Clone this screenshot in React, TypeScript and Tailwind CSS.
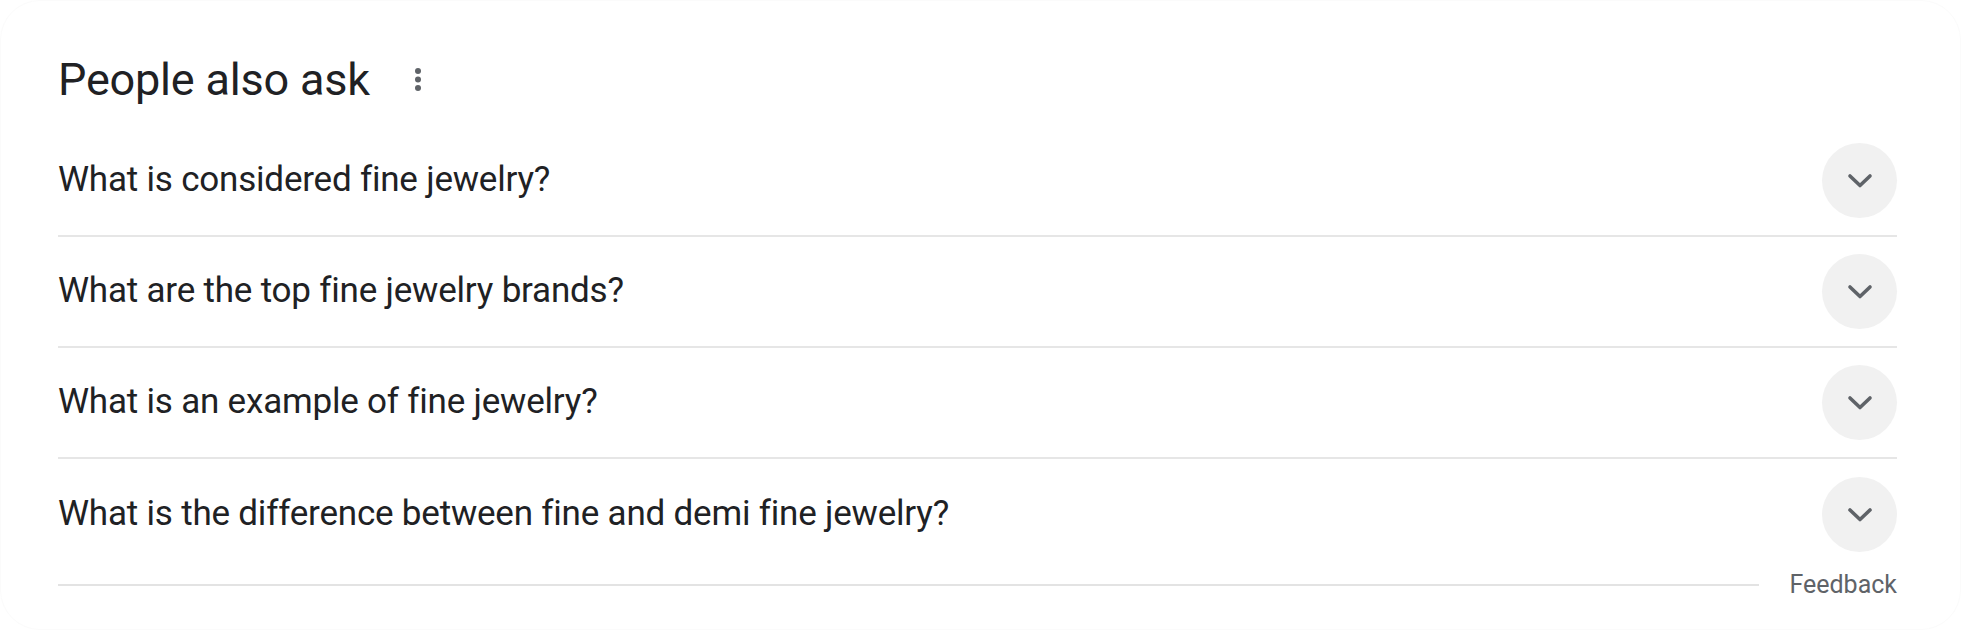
import React from 'react';

const questions = [
  'What is considered fine jewelry?',
  'What are the top fine jewelry brands?',
  'What is an example of fine jewelry?',
  'What is the difference between fine and demi fine jewelry?',
];

// Chevron inside the grey round toggle
const Chevron = () => (
  <svg width="26" height="16" viewBox="0 0 26 16" fill="none">
    <path d="M3 3 L13 12.5 L23 3" stroke="#5f6368" strokeWidth="3.6" strokeLinecap="round" strokeLinejoin="round" />
  </svg>
);

// Vertical three-dot menu
const Kebab = () => (
  <svg width="8" height="26" viewBox="0 0 8 26">
    <circle cx="4" cy="4" r="3" fill="#5f6368" />
    <circle cx="4" cy="12.5" r="3" fill="#5f6368" />
    <circle cx="4" cy="21" r="3" fill="#5f6368" />
  </svg>
);

export default function App() {
  return (
    <div
      className="w-[1961px] h-[630px] bg-white rounded-[40px] border border-[#fbfbfb] pl-[57px] pr-[63px] flex flex-col"
      style={{ fontFamily: 'Roboto, "Open Sans", Arial, sans-serif' }}
    >
      {/* Header */}
      <div className="h-[125px] flex items-start pt-[52px] gap-[44px]">
        <h2 className="text-[45px] leading-[54px] text-[#202124] tracking-[-0.2px]">People also ask</h2>
        <div className="mt-[14px]">
          <Kebab />
        </div>
      </div>

      {/* Questions */}
      <div className="flex flex-col">
        {questions.map((q, i) => (
          <div
            key={q}
            className={
              i < questions.length - 1
                ? 'h-[111px] flex items-center justify-between border-b-2 border-[#e6e6e6]'
                : 'h-[111px] flex items-center justify-between'
            }
          >
            <span className="text-[35px] text-[#202124] tracking-[-0.2px]">{q}</span>
            <div className="w-[75px] h-[75px] rounded-full bg-[#f1f1f1] flex items-center justify-center">
              <Chevron />
            </div>
          </div>
        ))}
      </div>

      {/* Footer */}
      <div className="flex items-center gap-[30px] -mt-[4px]">
        <div className="flex-1 h-[2px] bg-[#e3e3e3]" />
        <span className="text-[25px] text-[#5f6368]">Feedback</span>
      </div>
    </div>
  );
}
